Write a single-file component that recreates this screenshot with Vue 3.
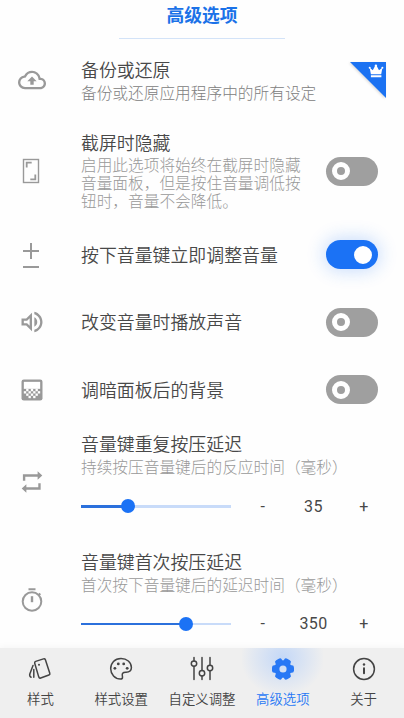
<script setup>
import { ref } from 'vue'

const options = ref([
  { id: 'backup', title: '备份或还原', desc: ['备份或还原应用程序中的所有设定'], pro: true },
  { id: 'hide', title: '截屏时隐藏', desc: ['启用此选项将始终在截屏时隐藏', '音量面板，但是按住音量调低按', '钮时，音量不会降低。'], on: false },
  { id: 'adjust', title: '按下音量键立即调整音量', on: true },
  { id: 'sound', title: '改变音量时播放声音', on: false },
  { id: 'dim', title: '调暗面板后的背景', on: false },
])
const sliders = ref([
  { id: 'repeat', title: '音量键重复按压延迟', desc: '持续按压音量键后的反应时间（毫秒）', value: 35, pct: 31.6 },
  { id: 'timer', title: '音量键首次按压延迟', desc: '首次按下音量键后的延迟时间（毫秒）', value: 350, pct: 70 },
])
const tabs = [
  { id: 'style', label: '样式' },
  { id: 'palette', label: '样式设置' },
  { id: 'tune', label: '自定义调整' },
  { id: 'advanced', label: '高级选项' },
  { id: 'about', label: '关于' },
]
const active = ref('advanced')
const dots = [[5, 13], [9, 13], [13, 13], [17, 13], [7, 15], [11, 15], [15, 15], [9, 17], [13, 17]]
</script>

<template>
  <div class="screen">
    <header class="head"><h1>高级选项</h1></header>
    <main class="list">
      <section v-for="o in options" :key="o.id" class="row" :class="o.id">
        <div class="lead">
          <svg v-if="o.id === 'backup'" width="28" height="28" viewBox="0 0 24 24"><path fill="#999" d="M19.35 10.04A7.49 7.49 0 0 0 12 4C9.11 4 6.6 5.64 5.35 8.04A5.994 5.994 0 0 0 0 14c0 3.31 2.69 6 6 6h13c2.76 0 5-2.24 5-5 0-2.64-2.05-4.78-4.65-4.96zM19 18H6c-2.21 0-4-1.79-4-4 0-2.05 1.53-3.76 3.56-3.97l1.07-.11.5-.95A5.469 5.469 0 0 1 12 6c2.62 0 4.88 1.86 5.39 4.43l.3 1.5 1.53.11A2.98 2.98 0 0 1 22 15c0 1.65-1.35 3-3 3zM8 13h2.55v3h2.9v-3H16l-4-4z" /></svg>
          <svg v-else-if="o.id === 'hide'" width="18" height="26" viewBox="0 0 18 26" fill="none" stroke="#999"><rect x="1.5" y="1.5" width="15" height="23" stroke-width="1.4" /><path d="M4.700 9.500V4.700h5M13.300 16.500v4.800h-5" stroke-width="1.800" /></svg>
          <svg v-else-if="o.id === 'adjust'" width="18" height="28" viewBox="0 0 18 28" fill="none" stroke="#999" stroke-width="2"><path d="M9 2v16M1 10h16M1 26h16" /></svg>
          <svg v-else-if="o.id === 'sound'" width="28" height="28" viewBox="0 0 24 24"><path fill="#999" d="M3 9v6h4l5 5V4L7 9H3zm7-.17v6.34L7.83 13H5v-2h2.83L10 8.83zM16.5 12A4.5 4.5 0 0 0 14 7.97v8.05A4.47 4.47 0 0 0 16.5 12zM14 3.23v2.06c2.89.86 5 3.54 5 6.71s-2.11 5.85-5 6.71v2.06c4.01-.91 7-4.49 7-8.77s-2.99-7.86-7-8.77z" /></svg>
          <svg v-else width="28" height="28" viewBox="0 0 24 24"><rect x="3" y="3" width="18" height="18" rx="2" fill="#999" /><path fill="#fff" d="M5 5h14v6H5z" /><rect v-for="(d, i) in dots" :key="i" :x="d[0]" :y="d[1]" width="2" height="2" fill="#fff" /><path fill="#fff" d="M7 11h2v2H7zM11 11h2v2h-2zM15 11h2v2h-2z" /></svg>
        </div>
        <div class="text">
          <h2>{{ o.title }}</h2>
          <p v-for="line in o.desc" :key="line">{{ line }}</p>
        </div>
        <svg v-if="o.pro" class="badge" width="37" height="38" viewBox="0 0 37 38"><path d="M1 1h36v36z" fill="#1b72f2" /><g transform="translate(.7 .8)" fill="#fff"><path d="m20 6 3.100 2.500L25.200 4.500l1-.8 1 .8 2.100 4L32.700 6l-1.200 6.500H21.200zM21.200 13.500h10.500v2H21.200z" /><circle cx="20" cy="6" r="1" /><circle cx="26.200" cy="4" r="1.200" /><circle cx="32.700" cy="6" r="1" /></g></svg>
        <button v-else class="switch" :class="{ on: o.on }" @click="o.on = !o.on"><span class="knob"></span></button>
      </section>

      <section v-for="s in sliders" :key="s.id" class="row slide">
        <div class="lead">
          <svg v-if="s.id === 'repeat'" width="26" height="26" viewBox="0 0 24 24" fill="#999"><path d="M3.600 10.800V4.900h13.600V2l4.300 4-4.300 4V7.100H5.800v3.700zM20 13.200v5.900H6.800V22l-4.300-4 4.300-4v2.900h11v-3.700z" /></svg>
          <svg v-else width="26" height="28" viewBox="0 0 26 28" fill="none" stroke="#999" stroke-width="2"><circle cx="13" cy="15.500" r="9.300" /><path d="M9.500 3.200h7M19.300 9.500l2-2" /><path d="M13 10.200v6" stroke-width="2.400" /></svg>
        </div>
        <div class="text">
          <h2>{{ s.title }}</h2>
          <p>{{ s.desc }}</p>
          <div class="control">
            <div class="track"><div class="fill" :style="{ width: s.pct + '%' }"><span class="thumb"></span></div></div>
            <span class="step">-</span>
            <span class="value">{{ s.value }}</span>
            <span class="step">+</span>
          </div>
        </div>
      </section>
    </main>

    <nav class="nav">
      <button v-for="t in tabs" :key="t.id" class="tab" :class="{ active: active === t.id }" @click="active = t.id">
        <svg width="26" height="26" viewBox="0 0 26 26" fill="none" stroke="currentColor" stroke-width="1.500" stroke-linecap="round" stroke-linejoin="round">
          <template v-if="t.id === 'style'">
            <path d="m8.700 5.400 7.800-2.500q1.400-.4 1.900.9l4.400 13.400q.4 1.300-.9 1.800L13.700 22q-1.400.5-1.900-.9L7.700 7.300q-.4-1.400 1-1.900zM6 9.500 2.800 18q-.6 2.300 1.300 3.200M6.800 13.500v7.800" />
            <circle cx="12" cy="8.700" r="1" fill="currentColor" stroke="none" />
          </template>
          <template v-else-if="t.id === 'palette'">
            <path d="M13 2.500C6.700 2.500 2.700 7 2.700 12.800c0 5.600 4.300 10.300 9.800 10.300 1.200 0 2-.8 2-1.900 0-1.500-.8-2.800.2-4 .8-1 2-.9 3.400-.9 3 0 5.300-1.600 5.300-4.700C23.400 6.200 18.700 2.500 13 2.500z" />
            <g fill="currentColor" stroke="none"><circle cx="6.900" cy="12.300" r="1.400" /><circle cx="10.300" cy="7.900" r="1.400" /><circle cx="15.700" cy="7.900" r="1.400" /><circle cx="19.200" cy="12.300" r="1.400" /></g>
          </template>
          <template v-else-if="t.id === 'tune'">
            <path d="M5 1.500v3.400M5 10.300v13.200M13 1.500v13M13 20.100v3.400M21 1.500v7.700M21 14.700v8.800" />
            <circle cx="5" cy="7.600" r="2.700" /><circle cx="13" cy="17.300" r="2.700" /><circle cx="21" cy="12" r="2.700" />
          </template>
          <template v-else-if="t.id === 'advanced'">
            <circle cx="13" cy="13" r="6.200" stroke-width="5.200" />
            <rect v-for="a in [0, 60, 120, 180, 240, 300]" :key="a" x="18" y="9.300" width="6" height="7.400" rx="2.200" fill="currentColor" stroke="none" :transform="`rotate(${a} 13 13)`" />
          </template>
          <template v-else>
            <circle cx="13" cy="13" r="10.400" /><circle cx="13" cy="8.500" r="1.200" fill="currentColor" stroke="none" /><path d="M13 12.300v5" stroke-width="2" />
          </template>
        </svg>
        <span>{{ t.label }}</span>
      </button>
    </nav>
  </div>
</template>

<style>
body { margin: 0; background: #fefefe; overflow: hidden; }
</style>

<style scoped>
.screen {
  width: 404px;
  height: 718px;
  display: flex;
  flex-direction: column;
  overflow: hidden;
  background: #fefefe;
  color: #484848;
  font-family: Roboto, "Noto Sans CJK SC", sans-serif;
}
h1, h2, p { margin: 0; }
.head {
  flex: none;
  box-sizing: border-box;
  width: 166px;
  height: 39px;
  padding-top: 1px;
  margin-left: 119px;
  border-bottom: 1px solid #d3e3f8;
  text-align: center;
}
h1 { color: #1b72e8; font-size: 17.8px; line-height: 30px; font-weight: 700; }
.list { flex: 1; min-height: 0; padding-top: 5px; overflow: hidden; }
.row { display: flex; align-items: center; padding-right: 26px; }
.lead { flex: none; width: 63px; margin-right: 18px; display: flex; justify-content: center; }
.lead svg { display: block; }
.hide .lead, .adjust .lead { width: 62px; margin-right: 19px; }
.text { flex: 1; min-width: 0; }
h2 { font-size: 17.9px; line-height: 25px; font-weight: 350; white-space: nowrap; }
p { font-size: 15.7px; line-height: 18px; font-weight: 300; color: #808080; white-space: nowrap; }
.backup { height: 72px; padding-right: 18px; }
.backup .text { padding-top: 2px; }
.backup p { line-height: 21px; }
.hide { height: 110px; }
.hide h2 { line-height: 26px; }
.hide p { color: #999; }
.adjust { height: 57px; margin-bottom: 5.500px; }
.adjust .text { padding-top: 2px; }
.sound, .dim { height: 67.500px; }
.sound .text, .dim .text { padding-top: 1px; }
.badge { flex: none; filter: drop-shadow(-1px 1px 1px #0002); }
.switch {
  flex: none;
  width: 52px;
  height: 29px;
  padding: 0 6px;
  border: 0;
  border-radius: 15px;
  background: #9f9f9f;
  display: flex;
  align-items: center;
}
.knob { box-sizing: border-box; width: 18px; height: 18px; border: 5px solid #fff; border-radius: 50%; }
.switch.on { background: #1b72f5; justify-content: flex-end; box-shadow: 0 0 18px 2px #1b72f53d; }
.on .knob { background: #fff; }
.slide { height: 117.500px; padding-right: 0; }
.slide .text { padding-bottom: 14px; }
.slide p { line-height: 21px; color: #999; }
.control { display: flex; align-items: center; height: 24px; margin-top: 16px; font-size: 16px; letter-spacing: .4px; }
.track { flex: none; width: 150px; height: 2.500px; background: #c8dbf9; }
.fill { height: 100%; background: #2b70dc; display: flex; align-items: center; justify-content: flex-end; }
.thumb { flex: none; width: 14px; height: 14px; margin-right: -7px; border-radius: 50%; background: #1b72f5; }
.step { flex: none; width: 64px; text-align: center; }
.value { flex: none; width: 37px; text-align: center; }
.nav {
  flex: none;
  height: 70px;
  display: flex;
  background: #efefef;
  box-shadow: 0 0 8px #0000000d;
  position: relative;
}
.tab {
  flex: 1 1 0;
  min-width: 0;
  padding: 8px 0 0;
  border: 0;
  background: none;
  display: flex;
  flex-direction: column;
  align-items: center;
  gap: 8px;
  color: #444;
  font: 350 13.400px/20px Roboto, "Noto Sans CJK SC", sans-serif;
  white-space: nowrap;
}
.tab svg { flex: none; display: block; }
.tab.active { color: #2878f5; background: radial-gradient(ellipse 42px 38px at 50% 10px, #c4d8f7, #efefef00); }
</style>
